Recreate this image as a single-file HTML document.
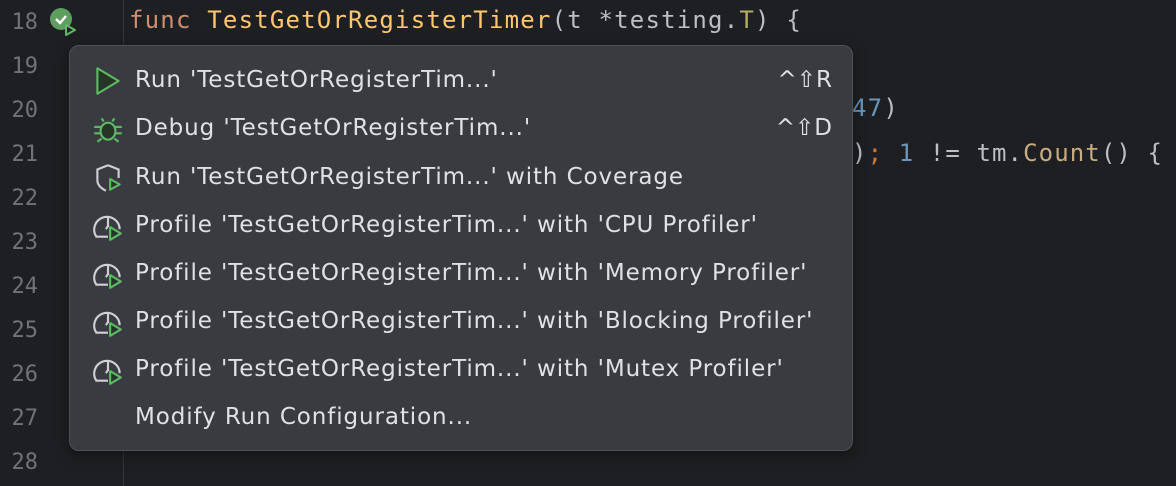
<!DOCTYPE html>
<html><head><style>
body{margin:0;width:1176px;height:486px;background:#1e1f22;overflow:hidden;position:relative;font-family:"DejaVu Sans","Liberation Sans",sans-serif}
.ln{position:absolute;left:0;width:38px;text-align:right;font:22px "DejaVu Sans Mono","Liberation Mono",monospace;color:#6f737a}
.sep{position:absolute;left:123px;top:0;width:1px;height:486px;background:#313438}
.code{position:absolute;font:24px "DejaVu Sans Mono","Liberation Mono",monospace;color:#bcbec4;white-space:pre}
.pop{position:absolute;left:69px;top:45px;width:782px;height:404px;background:#393b40;border:1px solid #4e5157;border-radius:10px;box-shadow:0 4px 14px rgba(0,0,0,.4)}
.it{position:absolute;left:65px;font-size:23px;letter-spacing:0.9px;color:#dfe1e5;white-space:nowrap}
.ic{position:absolute;left:21px;width:34px;height:34px}
.sc{position:absolute;right:20px;font-size:23px;color:#dfe1e5}
</style></head><body>
<div class="sep"></div>
<div class="ln" style="top:10px">18</div>
<div class="ln" style="top:54px">19</div>
<div class="ln" style="top:98px">20</div>
<div class="ln" style="top:142px">21</div>
<div class="ln" style="top:186px">22</div>
<div class="ln" style="top:230px">23</div>
<div class="ln" style="top:274px">24</div>
<div class="ln" style="top:318px">25</div>
<div class="ln" style="top:362px">26</div>
<div class="ln" style="top:406px">27</div>
<div class="ln" style="top:450px">28</div>
<svg style="position:absolute;left:48px;top:6px" width="34" height="32" viewBox="0 0 34 32">
<circle cx="13" cy="13" r="11" fill="#5e9e5f"/>
<path d="M8 13l4 4 6-7" stroke="#fff" stroke-width="2.4" fill="none"/>
<path d="M18 19l9 5-9 5z" fill="#1e1f22" stroke="#5fb865" stroke-width="2" stroke-linejoin="round"/>
</svg>
<div class="code" style="left:129px;top:6px;letter-spacing:1.2px"><span style="color:#cf8e6d">func</span> <span style="color:#ffc66d">TestGetOrRegisterTimer</span>(t *testing.<span style="color:#b3ae60">T</span>) {</div>
<div class="code" style="left:852px;top:94px;letter-spacing:1.2px"><span style="color:#6897bb">47</span>)</div>
<div class="code" style="left:852px;top:139px;letter-spacing:1.1px">)<span style="color:#cc7832">;</span> <span style="color:#6897bb">1</span> != tm.<span style="color:#c7ad82">Count</span>() {</div>
<div class="pop">
<svg class="ic" style="top:18px" viewBox="0 0 32 32"><path d="M6 4l20 12-20 12z" fill="#253627" stroke="#5fb865" stroke-width="2" stroke-linejoin="round"/></svg>
<div class="it" style="top:21px">Run 'TestGetOrRegisterTim...'</div><div class="sc" style="top:21px">^⇧R</div>
<svg class="ic" style="top:66px" viewBox="0 0 32 32" fill="none" stroke="#5fb865" stroke-width="2"><ellipse cx="16" cy="18" rx="7" ry="8" fill="#253627"/><path d="M12 9l-2-3M20 9l2-3M9 14H3M23 14h6M9 20H3M23 20h6M10 25l-4 3M22 25l4 3"/></svg>
<div class="it" style="top:69px">Debug 'TestGetOrRegisterTim...'</div><div class="sc" style="top:69px">^⇧D</div>
<svg class="ic" style="top:115px" viewBox="0 0 32 32" fill="none"><path d="M16 4l10 4v8M16 4L6 8v10c0 5 4 8 8 10" stroke="#ced0d6" stroke-width="2"/><path d="M18 17l9 5-9 5z" fill="#253627" stroke="#5fb865" stroke-width="2" stroke-linejoin="round"/></svg>
<div class="it" style="top:118px">Run 'TestGetOrRegisterTim...' with Coverage</div>
<svg class="ic" style="top:163px" viewBox="0 0 32 32" fill="none"><path d="M16 26H5a12 12 0 1 1 22-7M16 7v9l-2 3" stroke="#ced0d6" stroke-width="2"/><path d="M18 17l10 6-10 6z" fill="#253627" stroke="#5fb865" stroke-width="2" stroke-linejoin="round"/></svg>
<div class="it" style="top:166px">Profile 'TestGetOrRegisterTim...' with 'CPU Profiler'</div>
<svg class="ic" style="top:211px" viewBox="0 0 32 32" fill="none"><path d="M16 26H5a12 12 0 1 1 22-7M16 7v9l-2 3" stroke="#ced0d6" stroke-width="2"/><path d="M18 17l10 6-10 6z" fill="#253627" stroke="#5fb865" stroke-width="2" stroke-linejoin="round"/></svg>
<div class="it" style="top:214px">Profile 'TestGetOrRegisterTim...' with 'Memory Profiler'</div>
<svg class="ic" style="top:259px" viewBox="0 0 32 32" fill="none"><path d="M16 26H5a12 12 0 1 1 22-7M16 7v9l-2 3" stroke="#ced0d6" stroke-width="2"/><path d="M18 17l10 6-10 6z" fill="#253627" stroke="#5fb865" stroke-width="2" stroke-linejoin="round"/></svg>
<div class="it" style="top:262px">Profile 'TestGetOrRegisterTim...' with 'Blocking Profiler'</div>
<svg class="ic" style="top:307px" viewBox="0 0 32 32" fill="none"><path d="M16 26H5a12 12 0 1 1 22-7M16 7v9l-2 3" stroke="#ced0d6" stroke-width="2"/><path d="M18 17l10 6-10 6z" fill="#253627" stroke="#5fb865" stroke-width="2" stroke-linejoin="round"/></svg>
<div class="it" style="top:310px">Profile 'TestGetOrRegisterTim...' with 'Mutex Profiler'</div>
<div class="it" style="top:358px">Modify Run Configuration...</div>
</div>
</body></html>
